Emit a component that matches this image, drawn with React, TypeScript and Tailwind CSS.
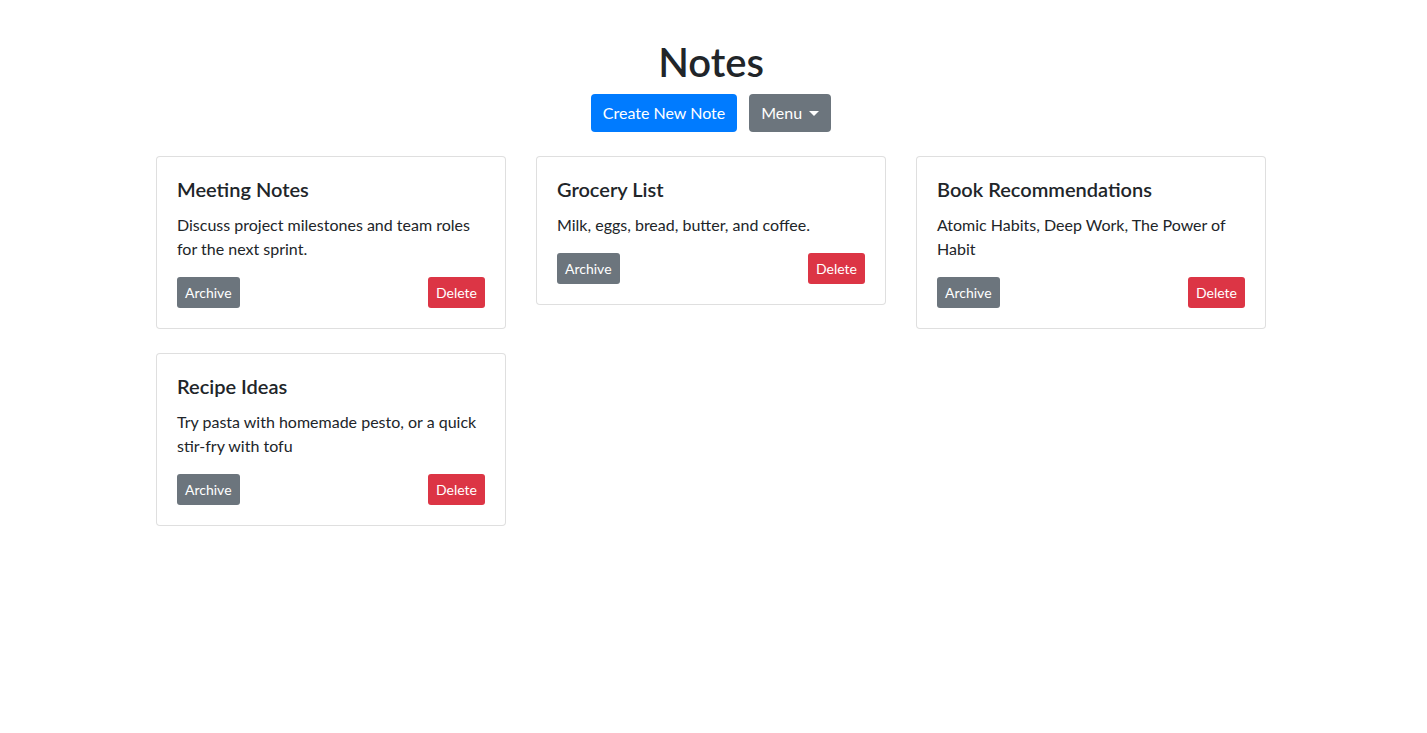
import React from "react";

type Note = { title: string; body: string };

const notes: Note[] = [
  { title: "Meeting Notes", body: "Discuss project milestones and team roles for the next sprint." },
  { title: "Grocery List", body: "Milk, eggs, bread, butter, and coffee." },
  { title: "Book Recommendations", body: "Atomic Habits, Deep Work, The Power of Habit" },
  { title: "Recipe Ideas", body: "Try pasta with homemade pesto, or a quick stir-fry with tofu" },
];

const NoteCard: React.FC<{ note: Note }> = ({ note }) => {
  return (
    <div className="w-[350px] rounded-[4px] border border-[rgba(0,0,0,0.125)] bg-white">
      <div className="p-5">
        <h5 className="mb-3 text-[20px] leading-[24px] font-semibold text-[#212529]">{note.title}</h5>
        <p className="mb-4 text-[16px] leading-[24px] text-[#212529]">{note.body}</p>
        <div className="flex justify-between">
          <button className="h-[31px] rounded-[3px] bg-[#6c757d] px-2 text-[14px] leading-[21px] text-white">
            Archive
          </button>
          <button className="h-[31px] rounded-[3px] bg-[#dc3545] px-2 text-[14px] leading-[21px] text-white">
            Delete
          </button>
        </div>
      </div>
    </div>
  );
};

export default function App() {
  return (
    <div
      className="min-h-screen bg-white pr-[5px] text-[#212529]"
      style={{ fontFamily: 'Lato, "Noto Sans", sans-serif' }}
    >
      <div className="mx-auto w-[1110px] pt-[38px]">
        <h1 className="mb-2 text-center text-[40px] leading-[48px] font-semibold">Notes</h1>
        <div className="mb-6 flex justify-center gap-3">
          <button className="h-[38px] rounded-[4px] bg-[#007bff] px-3 text-[16px] text-white">
            Create New Note
          </button>
          <button className="flex h-[38px] items-center rounded-[4px] bg-[#6c757d] px-3 text-[16px] text-white">
            Menu
            <span className="ml-[7px] inline-block h-0 w-0 border-x-[5px] border-t-[5px] border-x-transparent border-t-white" />
          </button>
        </div>
        <div className="grid grid-cols-3 items-start gap-x-[30px] gap-y-6">
          {notes.map((n) => (
            <NoteCard key={n.title} note={n} />
          ))}
        </div>
      </div>
    </div>
  );
}
